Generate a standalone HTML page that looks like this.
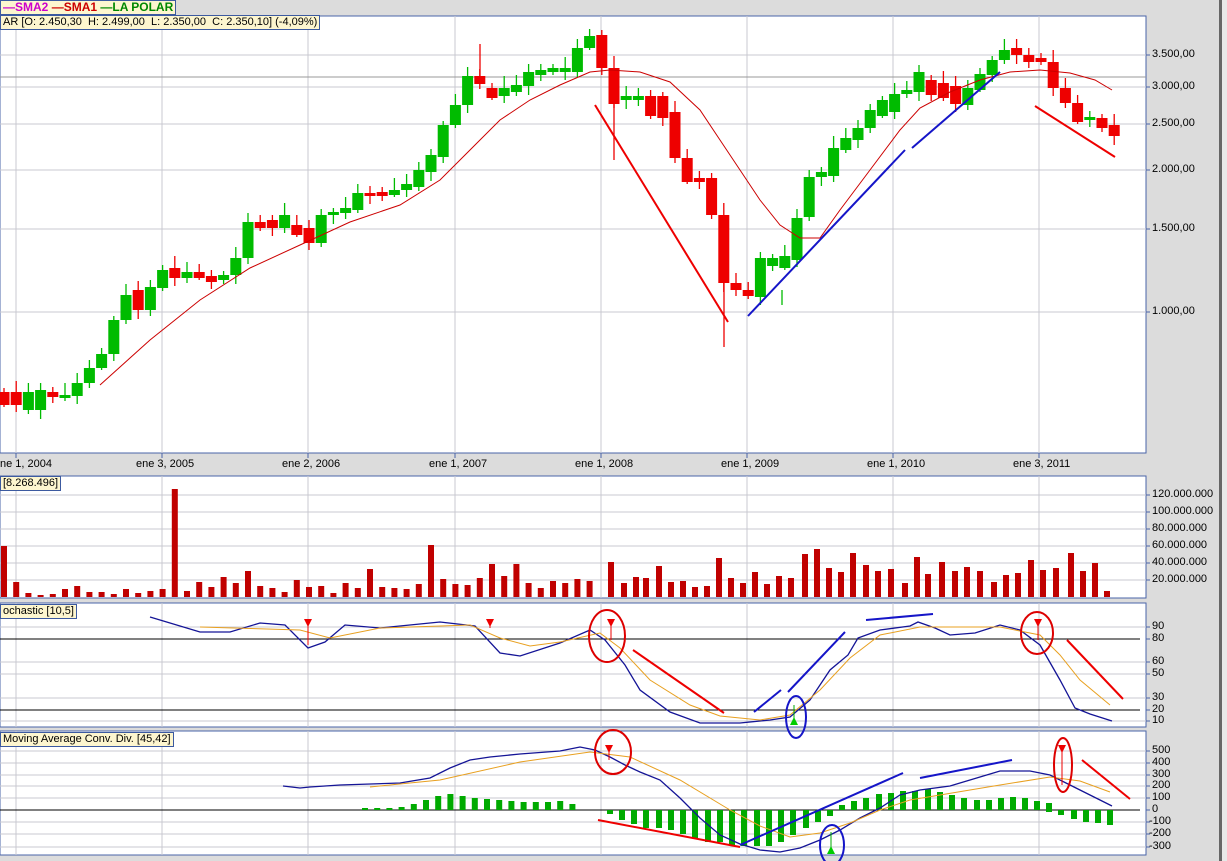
<!DOCTYPE html>
<html><head><meta charset="utf-8">
<style>
html,body{margin:0;padding:0;width:1227px;height:861px;overflow:hidden;background:#dcdcdc;font-family:"Liberation Sans",sans-serif}
svg{position:absolute;left:0;top:0}
.lbl{position:absolute;font-size:11px;color:#000;white-space:nowrap}
.box{position:absolute;background:#fdf6cf;border:1px solid #3c5aa0;font-size:11px;line-height:13px;padding:0 2px;white-space:nowrap}
</style></head><body>
<svg id="s" width="1227" height="861" xmlns="http://www.w3.org/2000/svg">
<rect x="1219" y="0" width="3" height="861" fill="#666"/>
<rect x="1222" y="0" width="5" height="861" fill="#e8e8e8"/>
<rect x="0" y="16" width="1146" height="437" fill="#fff" stroke="#4a64a8"/>
<rect x="0" y="476" width="1146" height="122" fill="#fff" stroke="#4a64a8"/>
<rect x="0" y="603" width="1146" height="124" fill="#fff" stroke="#4a64a8"/>
<rect x="0" y="731" width="1146" height="124" fill="#fff" stroke="#4a64a8"/>
<g id="g"></g>
</svg>
<div class="box" style="left:0;top:0;height:13px;font-weight:bold;font-size:12px;border-color:#3c5aa0"><span style="color:#c0c">—SMA2</span> <span style="color:#c00">—SMA1</span> <span style="color:#080">—LA POLAR</span></div>
<div class="box" style="left:0;top:15px;">AR [O: 2.450,30&nbsp; H: 2.499,00&nbsp; L: 2.350,00&nbsp; C: 2.350,10] (-4,09%)</div>
<div class="box" style="left:0;top:476px;">[8.268.496]</div>
<div class="box" style="left:0;top:604px;">ochastic [10,5]</div>
<div class="box" style="left:0;top:732px;">Moving Average Conv. Div. [45,42]</div>
<div class="lbl" style="left:0;top:458px">ne 1, 2004</div>
<div class="lbl" style="left:136px;top:458px">ene 3, 2005</div>
<div class="lbl" style="left:282px;top:458px">ene 2, 2006</div>
<div class="lbl" style="left:429px;top:458px">ene 1, 2007</div>
<div class="lbl" style="left:575px;top:458px">ene 1, 2008</div>
<div class="lbl" style="left:721px;top:458px">ene 1, 2009</div>
<div class="lbl" style="left:867px;top:458px">ene 1, 2010</div>
<div class="lbl" style="left:1013px;top:458px">ene 3, 2011</div>
<div class="lbl" style="left:1152px;top:48px">3.500,00</div>
<div class="lbl" style="left:1152px;top:80px">3.000,00</div>
<div class="lbl" style="left:1152px;top:117px">2.500,00</div>
<div class="lbl" style="left:1152px;top:163px">2.000,00</div>
<div class="lbl" style="left:1152px;top:222px">1.500,00</div>
<div class="lbl" style="left:1152px;top:305px">1.000,00</div>
<div class="lbl" style="left:1152px;top:488px">120.000.000</div>
<div class="lbl" style="left:1152px;top:505px">100.000.000</div>
<div class="lbl" style="left:1152px;top:522px">80.000.000</div>
<div class="lbl" style="left:1152px;top:539px">60.000.000</div>
<div class="lbl" style="left:1152px;top:556px">40.000.000</div>
<div class="lbl" style="left:1152px;top:573px">20.000.000</div>
<div class="lbl" style="left:1152px;top:620px">90</div>
<div class="lbl" style="left:1152px;top:632px">80</div>
<div class="lbl" style="left:1152px;top:655px">60</div>
<div class="lbl" style="left:1152px;top:667px">50</div>
<div class="lbl" style="left:1152px;top:691px">30</div>
<div class="lbl" style="left:1152px;top:703px">20</div>
<div class="lbl" style="left:1152px;top:714px">10</div>
<div class="lbl" style="left:1152px;top:744px">500</div>
<div class="lbl" style="left:1152px;top:756px">400</div>
<div class="lbl" style="left:1152px;top:768px">300</div>
<div class="lbl" style="left:1152px;top:779px">200</div>
<div class="lbl" style="left:1152px;top:791px">100</div>
<div class="lbl" style="left:1152px;top:803px">0</div>
<div class="lbl" style="left:1149px;top:815px">-100</div>
<div class="lbl" style="left:1149px;top:827px">-200</div>
<div class="lbl" style="left:1149px;top:840px">-300</div>
<script>
var g=document.getElementById('g'),h='';
function L(x1,y1,x2,y2,c,w){h+='<line x1="'+x1+'" y1="'+y1+'" x2="'+x2+'" y2="'+y2+'" stroke="'+c+'" stroke-width="'+(w||1)+'"/>';}
function R(x,y,w,hh,c){h+='<rect x="'+x+'" y="'+y+'" width="'+w+'" height="'+hh+'" fill="'+c+'"/>';}
function P(pts,c,w){h+='<polyline fill="none" stroke="'+c+'" stroke-width="'+(w||1)+'" points="'+pts.map(function(p){return p.join(',')}).join(' ')+'"/>';}
var gc='#c8c8d0';
var vx=[16,162,308,455,601,747,893,1039];
[[16,453],[476,598],[603,727],[731,855]].forEach(function(r){vx.forEach(function(x){L(x,r[0],x,r[1],gc);});});
vx.forEach(function(x){L(x,453,x,458,'#4a64a8');});
[55,87,124,170,229,312].forEach(function(y){L(0,y,1146,y,gc);L(1146,y,1150,y,'#4a64a8');});
L(0,77,1146,77,'#999');
[495,512,529,546,563,580].forEach(function(y){L(0,y,1146,y,gc);L(1146,y,1150,y,'#4a64a8');});
[627,662,674,698,721].forEach(function(y){L(0,y,1146,y,gc);});
[627,639,662,674,698,710,721].forEach(function(y){L(1146,y,1150,y,'#4a64a8');});
L(0,639,1140,639,'#000');L(0,710,1140,710,'#000');
[751,763,775,786,798,822,834,847].forEach(function(y){L(0,y,1146,y,gc);});
[751,763,775,786,798,810,822,834,847].forEach(function(y){L(1146,y,1150,y,'#4a64a8');});
L(0,810,1140,810,'#000');
var C=[[392,405],[392,405],[410,392],[410,390],[392,397],[398,395],[396,383],[383,368],[368,354],[354,320],[320,295],[290,310],[310,287],[288,270],[268,278],[278,272],[272,278],[276,282],[280,275],[275,258],[258,222],[222,228],[220,228],[228,215],[225,235],[228,243],[243,215],[215,212],[213,208],[210,193],[193,196],[192,196],[195,190],[190,184],[187,170],[172,155],[157,125],[125,105],[105,76],[76,84],[88,98],[96,88],[92,85],[86,72],[75,70],[72,68],[72,68],[72,48],[48,36],[35,68],[68,104],[100,96],[100,96],[96,116],[96,118],[112,158],[158,182],[178,182],[178,215],[215,283],[283,290],[290,296],[297,258],[266,258],[268,256],[260,218],[217,177],[177,172],[176,148],[150,138],[140,128],[128,110],[116,100],[112,94],[94,90],[92,72],[80,95],[83,98],[86,104],[105,88],[90,74],[75,60],[60,50],[48,55],[55,62],[58,62],[62,88],[88,103],[103,122],[120,117],[118,128],[125,136]];
C.forEach(function(c,i){var x=4+12.2*i,t=Math.min(c[0],c[1]),b=Math.max(c[0],c[1]);var col=c[1]<c[0]?'#0b0':'#e00';
var wh=4+(i*7%9);L(x,t-wh,x,b+(i*5%8)+2,col,1.3);R(x-5.5,t,11,Math.max(b-t,3),col);});
L(614,104,614,160,'#e00',1.3);L(724,283,724,347,'#e00',1.3);L(782,290,782,305,'#0b0',1.3);L(480,44,480,76,'#e00',1.3);
P([[100,385],[150,340],[200,300],[250,268],[300,245],[350,222],[400,205],[440,180],[470,150],[500,120],[530,100],[560,85],[590,72],[610,70],[640,72],[670,82],[700,110],[720,140],[740,170],[760,200],[780,225],[800,238],[820,238],[840,210],[870,170],[900,130],[920,108],[950,92],[980,80],[1010,72],[1040,70],[1070,73],[1095,80],[1112,90]],'#c00',1);
L(595,105,728,322,'#e00',2);L(748,316,905,150,'#1515c8',2);L(912,148,1000,72,'#1515c8',2);L(1035,106,1115,157,'#e00',2);
var V=[546,582,593,595,594,589,586,592,592,594,589,593,591,589,489,591,582,587,577,583,571,586,588,592,580,587,586,593,583,588,569,587,588,589,584,545,579,584,585,578,564,576,564,583,588,581,583,579,581];
V.forEach(function(t,i){R(1+12.2*i,t,6,597-t,'#c00000');});
var V2=[[611,562],[624,583],[636,577],[646,578],[659,566],[671,582],[683,581],[695,587],[707,586],[719,558],[731,578],[743,583],[755,572],[767,584],[779,576],[791,578],[805,554],[817,549],[829,568],[841,572],[853,553],[866,565],[878,571],[891,569],[905,583],[917,557],[928,574],[942,562],[955,571],[967,567],[980,571],[994,582],[1006,575],[1018,573],[1031,560],[1043,570],[1056,568],[1071,553],[1083,571],[1095,563],[1107,591]];
V2.forEach(function(v){R(v[0]-3,v[1],6,597-v[1],'#c00000');});
P([[150,617],[200,632],[230,632],[260,623],[285,625],[308,648],[325,642],[345,625],[380,628],[440,622],[475,626],[500,653],[520,656],[560,643],[590,630],[605,640],[625,665],[640,690],[670,712],[700,723],[740,723],[770,720],[790,717],[810,700],[830,670],[848,655],[858,638],[880,630],[910,626],[918,622],[935,628],[950,635],[975,633],[1000,625],[1020,630],[1040,645],[1060,680],[1075,708],[1090,714],[1112,721]],'#141496',1.3);
P([[200,627],[300,630],[330,638],[380,628],[470,625],[500,638],[530,646],[560,642],[600,633],[620,648],[650,680],[690,705],[720,716],[760,720],[790,715],[820,690],[850,658],[880,635],[920,627],[1000,627],[1040,635],[1060,655],[1080,680],[1110,705]],'#e8a020',1);
function tri(x,y,c,up){h+='<polygon points="'+(x-4)+','+y+' '+(x+4)+','+y+' '+x+','+(up?y-8:y+8)+'" fill="'+c+'"/>';}
L(308,622,308,645,'#e00');tri(308,619,'#e00');L(490,622,490,628,'#e00');tri(490,619,'#e00');
L(611,622,611,640,'#e00');tri(611,619,'#e00');L(1038,622,1038,640,'#e00');tri(1038,619,'#e00');
L(794,705,794,720,'#0a0');tri(794,725,'#0c0',1);
function el(x,y,rx,ry,c){h+='<ellipse cx="'+x+'" cy="'+y+'" rx="'+rx+'" ry="'+ry+'" fill="none" stroke="'+c+'" stroke-width="2"/>';}
el(607,636,18,26,'#d00');el(1037,633,16,21,'#d00');el(796,717,10,21,'#1515c8');
L(633,650,724,713,'#e00',2);L(1067,640,1123,699,'#e00',2);
L(754,712,781,690,'#1515c8',2);L(788,692,845,632,'#1515c8',2);L(866,620,933,614,'#1515c8',2);
for(var i=0;i<20;i++){var x=365+12.2*i;var v=[2,2,2,3,6,10,14,16,14,12,11,10,9,8,8,8,9,6,0,0][i];if(v)R(x-3,810-v,6,v,'#0a0');}
var neg=[[610,4],[622,10],[634,14],[646,18],[659,18],[671,20],[683,24],[695,28],[708,32],[720,32],[732,36],[744,36],[757,36],[769,36],[781,32],[793,25],[806,18],[818,12],[830,6]];
neg.forEach(function(n){R(n[0]-3,810,6,n[1],'#0a0');});
var pos=[[842,5],[854,9],[866,12],[879,16],[891,17],[903,19],[915,19],[928,21],[940,18],[952,15],[964,12],[977,10],[989,10],[1001,12],[1013,13],[1025,12],[1037,9],[1049,7],[1061,0]];
pos.forEach(function(n){if(n[1])R(n[0]-3,810-n[1],6,n[1],'#0a0');});
[[1049,2],[1061,5],[1074,9],[1086,12],[1098,13],[1110,15]].forEach(function(n){R(n[0]-3,810,6,n[1],'#0a0');});
P([[283,786],[300,788],[310,787],[340,785],[400,783],[430,778],[450,768],[470,760],[490,757],[520,754],[560,751],[580,747],[595,750],[610,757],[625,765],[640,772],[660,780],[680,798],[700,818],[720,835],[740,844],[760,850],[780,852],[800,848],[820,840],[840,830],[860,818],[880,808],[900,795],[920,790],[950,786],[980,777],[1000,771],[1030,771],[1050,775],[1070,785],[1090,795],[1112,806]],'#141496',1.3);
P([[370,787],[440,780],[520,762],[590,752],[630,757],[680,780],[730,810],[760,826],[790,837],[820,833],[850,823],[880,810],[910,800],[940,795],[1000,785],[1050,777],[1080,781],[1110,792]],'#e8a020',1);
el(613,752,18,22,'#d00');el(1063,765,9,27,'#d00');el(832,845,12,20,'#1515c8');
L(609,748,609,760,'#e00');tri(609,745,'#e00');L(1062,750,1062,785,'#e00');tri(1062,745,'#e00');
L(831,832,831,850,'#0a0');tri(831,854,'#0c0',1);
L(598,820,740,847,'#e00',2);L(740,845,903,773,'#1515c8',2);L(920,778,1012,760,'#1515c8',2);L(1082,760,1130,799,'#e00',2);
g.innerHTML=h;
</script>
</body></html>
